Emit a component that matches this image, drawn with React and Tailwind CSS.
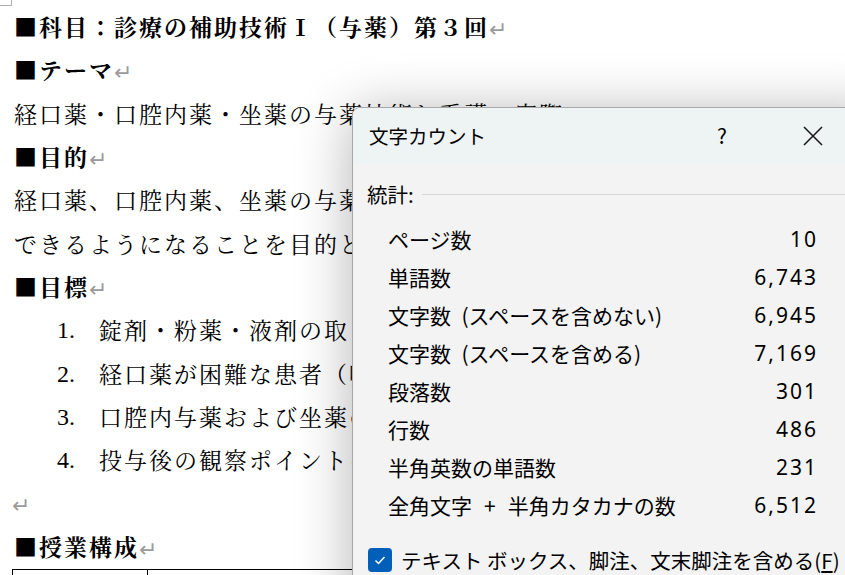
import React from "react";

const docFont = {
  fontFamily: '"Noto Serif CJK JP", "Noto Sans CJK JP", serif',
};

const Mark = () => <span className="text-[#9a9a9a] font-normal text-[22px] tracking-normal">↵</span>;

function DocLine({ children, className = "" }) {
  return (
    <div className={`h-[43.33px] flex items-center whitespace-nowrap ${className}`}>
      {children}
    </div>
  );
}

function ListItem({ n, text }) {
  return (
    <DocLine className="pl-[43px]">
      <span className="w-[42px] text-[24px] tracking-normal font-['Liberation_Serif',serif]">{n}.</span>
      <span>{text}</span>
    </DocLine>
  );
}

const stats = [
  ["ページ数", "10"],
  ["単語数", "6,743"],
  ["文字数\u2002(スペースを含めない)", "6,945"],
  ["文字数\u2002(スペースを含める)", "7,169"],
  ["段落数", "301"],
  ["行数", "486"],
  ["半角英数の単語数", "231"],
  [
    <>
      全角文字<span className="mx-[12px]">+</span>半角カタカナの数
    </>,
    "6,512",
  ],
];

function WordCountDialog() {
  return (
    <div className="absolute left-[352px] top-[107px] w-[540px] h-[520px] rounded-tl-[8px] border border-[#a8a8a8] bg-[#f3f3f3] shadow-[0_6px_56px_rgba(0,0,0,0.3)] overflow-hidden font-['Noto_Sans_CJK_JP',sans-serif] text-black">
      {/* title bar */}
      <div className="h-[55px] bg-[#eef3f4] flex items-center pl-[16px]">
        <div className="w-[333px] text-[19.5px]">文字カウント</div>
        <div className="w-[40px] text-center text-[21px]">?</div>
        <div className="w-[40px] ml-[51px] flex justify-center">
          <svg width="22" height="22" viewBox="0 0 22 22" fill="none" stroke="#1b1b1b" strokeWidth="1.6">
            <path d="M2 2 L20 20 M20 2 L2 20" />
          </svg>
        </div>
      </div>

      {/* body */}
      <div className="pt-[16px]">
        <div className="flex items-center pl-[14px]">
          <span className="text-[20.5px]">統計:</span>
          <div className="flex-1 h-px bg-[#d6d6d6] ml-[8px]" />
        </div>
        <div className="pt-[11px] pl-[35px]">
          {stats.map(([label, value], i) => (
            <div key={i} className="w-[428px] h-[38px] flex items-center justify-between text-[21px]">
              <span>{label}</span>
              <span className="font-['Noto_Sans',sans-serif] tracking-[2px] -mr-[2px]">{value}</span>
            </div>
          ))}
        </div>
        <div className="flex items-center pl-[15px] mt-[20px]">
          <div className="w-[24px] h-[24px] rounded-[4px] bg-[#005fb8] flex items-center justify-center">
            <svg width="14" height="14" viewBox="0 0 14 14" fill="none" stroke="white" strokeWidth="1.5">
              <path d="M2.5 7.5 L5.5 10.5 L11.5 4" />
            </svg>
          </div>
          <span className="ml-[9px] text-[20.5px] whitespace-nowrap">
            テキスト ボックス、脚注、文末脚注を含める(<span className="underline">F</span>)
          </span>
        </div>
      </div>
    </div>
  );
}

export default function App() {
  return (
    <div className="relative w-[845px] h-[575px] overflow-hidden bg-white text-black">
      {/* corner crop mark */}
      <div className="absolute left-0 top-0 w-[12px] h-[6px] border-r border-b border-[#b0b0b0]" />

      <div className="pt-[5.5px] pl-[14px] text-[23px] tracking-[2px]" style={docFont}>
        <DocLine className="font-bold">■科目：診療の補助技術Ⅰ（与薬）第３回<Mark /></DocLine>
        <DocLine className="font-bold">■テーマ<Mark /></DocLine>
        <DocLine>経口薬・口腔内薬・坐薬の与薬技術と看護の実際</DocLine>
        <DocLine className="font-bold">■目的<Mark /></DocLine>
        <DocLine>経口薬、口腔内薬、坐薬の与薬方法を理解し、安全に実施</DocLine>
        <DocLine>できるようになることを目的とする。</DocLine>
        <DocLine className="font-bold">■目標<Mark /></DocLine>
        <ListItem n="1" text="錠剤・粉薬・液剤の取り扱いを説明できる。" />
        <ListItem n="2" text="経口薬が困難な患者（嚥下障害等）への与薬" />
        <ListItem n="3" text="口腔内与薬および坐薬の挿入方法を理解する。" />
        <ListItem n="4" text="投与後の観察ポイントを説明できる。" />
        <DocLine className="-ml-[2px]"><Mark /></DocLine>
        <DocLine className="font-bold">■授業構成<Mark /></DocLine>
      </div>

      {/* table top row */}
      <div className="ml-[12px] flex border-t border-l border-black h-[20px]">
        <div className="w-[135px] border-r border-black" />
        <div className="flex-1" />
      </div>

      <WordCountDialog />
    </div>
  );
}
